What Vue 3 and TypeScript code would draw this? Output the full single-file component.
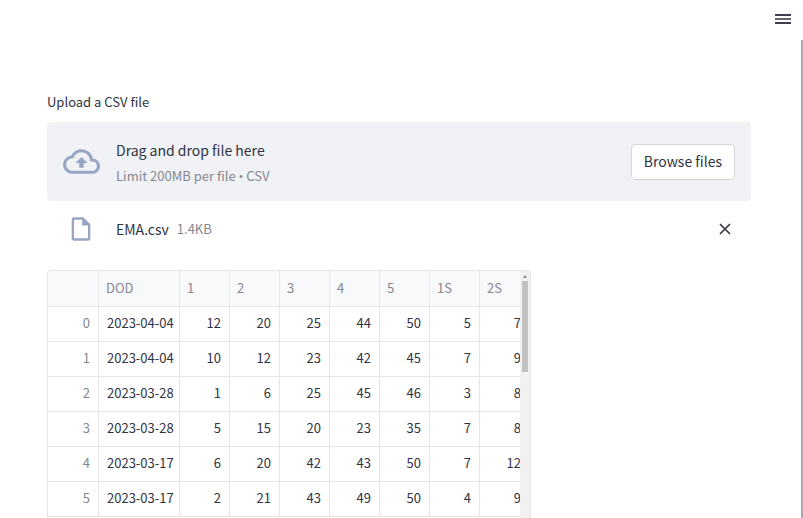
<script setup lang="ts">
import { ref } from 'vue'

interface UploadedFile {
  name: string
  size: string
}

const picker = ref<HTMLInputElement | null>(null)
const file = ref<UploadedFile | null>({ name: 'EMA.csv', size: '1.4KB' })

const columns: string[] = ['DOD', '1', '2', '3', '4', '5', '1S', '2S']
const rows: (string | number)[][] = [
  ['2023-04-04', 12, 20, 25, 44, 50, 5, 7],
  ['2023-04-04', 10, 12, 23, 42, 45, 7, 9],
  ['2023-03-28', 1, 6, 25, 45, 46, 3, 8],
  ['2023-03-28', 5, 15, 20, 23, 35, 7, 8],
  ['2023-03-17', 6, 20, 42, 43, 50, 7, 12],
  ['2023-03-17', 2, 21, 43, 49, 50, 4, 9],
]

function onPick(event: Event): void {
  const picked = (event.target as HTMLInputElement).files?.[0]
  if (picked) {
    file.value = { name: picked.name, size: (picked.size / 1024).toFixed(1) + 'KB' }
  }
}
</script>

<template>
  <div class="app">
    <header class="toolbar">
      <button class="icon-button" type="button" aria-label="Main menu">
        <svg width="16" height="12" viewBox="0 0 16 12" aria-hidden="true">
          <path d="M0 1h16v2H0zM0 9h16v2H0z" fill="#403e4d" />
          <path d="M0 5h16v2H0z" fill="#686573" />
        </svg>
      </button>
    </header>
    <div class="view">
      <main class="content">
        <label class="label" for="csv-file">Upload a CSV file</label>
        <section class="dropzone">
          <input id="csv-file" ref="picker" class="picker" type="file" accept=".csv" @change="onPick" />
          <svg class="cloud" width="36" height="36" viewBox="0 0 24 24" aria-hidden="true">
            <path
              d="M19.35 10.04A7.49 7.49 0 0 0 12 4C9.11 4 6.6 5.64 5.35 8.04A5.994 5.994 0 0 0 0 14c0 3.31 2.69 6 6 6h13c2.76 0 5-2.24 5-5 0-2.64-2.05-4.78-4.65-4.96zM19 18H6c-2.21 0-4-1.79-4-4 0-2.05 1.53-3.76 3.56-3.97l1.07-.11.5-.95A5.469 5.469 0 0 1 12 6c2.62 0 4.88 1.86 5.39 4.43l.3 1.5 1.53.11A2.98 2.98 0 0 1 22 15c0 1.65-1.35 3-3 3zM8 13h2.55v3h2.9v-3H16l-4-4-4 4z"
            />
          </svg>
          <div class="prompt">
            <span class="title">Drag and drop file here</span>
            <span class="hint">Limit 200MB per file <span class="bullet">•</span> CSV</span>
          </div>
          <button class="browse" type="button" @click="picker?.click()">Browse files</button>
        </section>
        <div v-if="file" class="file">
          <svg class="page" width="28" height="28" viewBox="0 0 24 24" aria-hidden="true">
            <path
              d="M14 2H6c-1.1 0-2 .9-2 2v16c0 1.1.9 2 2 2h12c1.1 0 2-.9 2-2V8l-6-6zM6 20V4h7v5h5v11H6z"
            />
          </svg>
          <span class="title">{{ file.name }}</span>
          <span class="size">{{ file.size }}</span>
          <button class="icon-button remove" type="button" aria-label="Remove file" @click="file = null">
            <svg width="12" height="12" viewBox="0 0 12 12" aria-hidden="true">
              <path d="M1 1l10 10M11 1L1 11" fill="none" stroke="#31333f" stroke-width="1.6" />
            </svg>
          </button>
        </div>
        <div class="frame">
          <div class="sheet">
            <table>
              <colgroup>
                <col class="col-index" />
                <col class="col-date" />
                <col v-for="n in 7" :key="n" class="col-number" />
              </colgroup>
              <thead>
                <tr>
                  <th></th>
                  <th v-for="name in columns" :key="name" scope="col">{{ name }}</th>
                </tr>
              </thead>
              <tbody>
                <tr v-for="(row, index) in rows" :key="index">
                  <th scope="row">{{ index }}</th>
                  <td v-for="(value, i) in row" :key="i">{{ value }}</td>
                </tr>
              </tbody>
            </table>
          </div>
          <div class="track" aria-hidden="true">
            <svg width="6" height="10" viewBox="0 0 6 10"><path d="M1 7h4L3 4z" fill="#8a8a8a" /></svg>
            <div class="thumb"></div>
          </div>
        </div>
      </main>
      <div class="gutter" aria-hidden="true"></div>
    </div>
  </div>
</template>

<style>
body {
  background: #fff;
}
</style>

<style scoped>
.app {
  display: flex;
  flex-direction: column;
  height: 100vh;
  overflow: hidden;
  color: #31333f;
  font-family: 'Source Sans Pro', 'Noto Sans CJK SC', sans-serif;
  font-size: 13px;
  line-height: 20px;
}

.app * {
  box-sizing: border-box;
}

button {
  font: inherit;
  color: inherit;
  cursor: pointer;
}

.toolbar {
  display: flex;
  flex: none;
  align-items: center;
  justify-content: flex-end;
  height: 40px;
  padding: 0 8px 2px;
}

.icon-button {
  display: flex;
  padding: 4px;
  border: 0;
  background: none;
}

.view {
  display: flex;
  flex: 1;
  min-height: 0;
}

.content {
  display: flex;
  flex: 1;
  flex-direction: column;
  min-width: 0;
  max-width: 736px;
  margin: 0 auto;
  padding: 52px 16px 0;
}

.gutter {
  flex: none;
  width: 5px;
  border-right: 2px solid #a9a9b0;
}

.label {
  flex: none;
  margin-bottom: 10px;
}

.dropzone {
  display: flex;
  flex: none;
  align-items: center;
  padding: 16px;
  border-radius: 4px;
  background: #f0f2f6;
}

.picker {
  display: none;
}

.cloud {
  flex: none;
  width: 37px;
  height: 37px;
  margin-right: 16px;
  fill: #97a6c3;
}

.prompt {
  display: flex;
  flex: 1;
  flex-direction: column;
  gap: 5px;
}

.title {
  font-size: 14px;
  line-height: 24px;
}

.hint,
.size {
  color: #85878f;
}

.hint {
  line-height: 18px;
}

.bullet {
  font-family: 'Open Sans', sans-serif;
  line-height: 1;
}

.browse {
  height: 36px;
  padding: 0 12px 2px;
  border: 1px solid #d6d6d9;
  border-radius: 4px;
  background: #fff;
  font-size: 14px;
}

.file {
  display: flex;
  flex: none;
  align-items: center;
  height: 24px;
  margin: 16px 16px 29px 20px;
}

.page {
  flex: none;
  margin-right: 21px;
  fill: #97a6c3;
}

.size {
  margin-left: 8px;
}

.remove {
  margin-left: auto;
}

.frame {
  display: flex;
  flex: 1;
  width: 484px;
  max-width: 100%;
  min-height: 0;
  border: 1px solid #e6e6e8;
  border-bottom: 0;
  border-radius: 4px 4px 0 0;
  overflow: hidden;
}

.sheet {
  flex: 1;
  min-width: 0;
  overflow: hidden;
}

table {
  width: 482px;
  table-layout: fixed;
  border-collapse: separate;
  border-spacing: 0;
}

.col-index {
  width: 51px;
}

.col-date {
  width: 81px;
}

.col-number {
  width: 50px;
}

th,
td {
  height: 35px;
  padding: 0 8px 2px;
  border-right: 1px solid #e6e6e8;
  border-bottom: 1px solid #e6e6e8;
  font-weight: 400;
  text-align: right;
  white-space: nowrap;
}

th {
  color: #85878f;
}

thead th {
  height: 36px;
  padding: 0 7px 2px;
  background: #f8f9fb;
  text-align: left;
}

.track {
  display: flex;
  flex: none;
  flex-direction: column;
  align-items: center;
  width: 10px;
  background: #f1f1f1;
}

.thumb {
  width: 6px;
  height: 91px;
  background: #c1c1c1;
}
</style>
